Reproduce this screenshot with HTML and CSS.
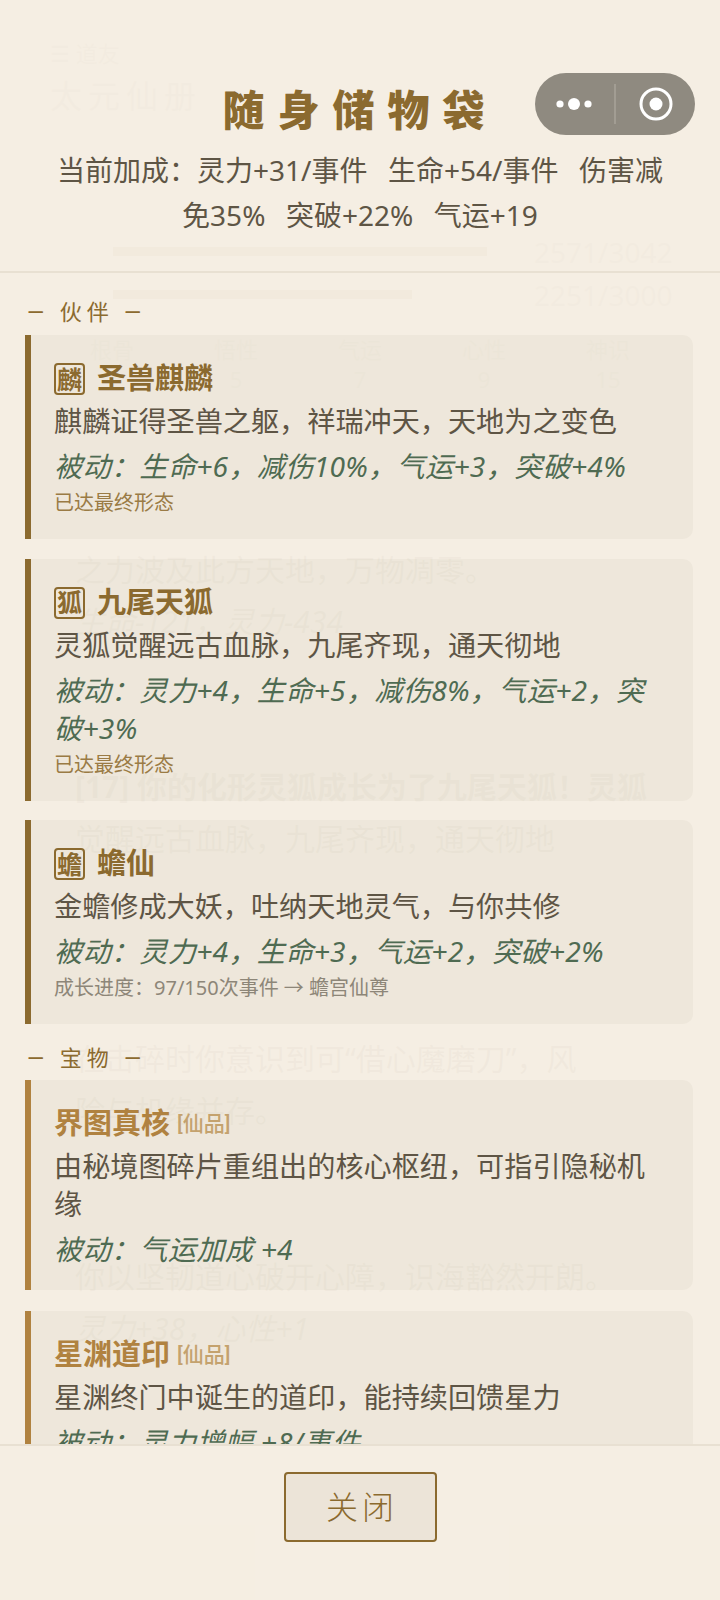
FILE: index.html
```html
<!DOCTYPE html>
<html lang="zh-CN">
<head>
<meta charset="utf-8">
<title>随身储物袋</title>
<link rel="stylesheet" href="styles.css">
</head>
<body>
<div class="app">
  <!-- game page underneath the bag sheet -->
  <div class="backdrop">
    <div class="bd-nav bd-dim">☰ 道友</div>
    <div class="bd-realm bd-dim">太元仙册</div>
    <div class="bd-meter bd-meter-first"><span class="bd-bar bd-bar-hp"></span><span class="bd-num bd-dim">2571/3042</span></div>
    <div class="bd-meter"><span class="bd-bar bd-bar-mp"></span><span class="bd-num bd-dim">2251/3000</span></div>
    <div class="bd-attrs bd-dim"><span>根骨</span><span>悟性</span><span>气运</span><span>心性</span><span>神识</span></div>
    <div class="bd-attrs bd-vals bd-dim"><span>7</span><span>5</span><span>7</span><span>9</span><span>15</span></div>
    <div class="bd-log">
      <p class="bd-line">之力波及此方天地，万物凋零。</p>
      <p class="bd-line bd-em">生命-121，灵力-434</p>
      <p class="bd-line bd-event">[17] 你的化形灵狐成长为了九尾天狐！灵狐</p>
      <p class="bd-line">觉醒远古血脉，九尾齐现，通天彻地</p>
      <p class="bd-line bd-event2">在击碎时你意识到可“借心魔磨刀”，风</p>
      <p class="bd-line">险与机缘并存。</p>
      <p class="bd-line bd-event3">你以坚韧道心破开心障，识海豁然开朗。</p>
      <p class="bd-line bd-em">灵力+38，心性+1</p>
    </div>
  </div>

  <div class="sheet">
    <header class="sheet-head">
      <h1 class="sheet-title">随身储物袋</h1>
      <p class="sheet-bonus">当前加成：灵力+31/事件&nbsp;&nbsp;生命+54/事件&nbsp;&nbsp;伤害减免35%&nbsp;&nbsp;突破+22%&nbsp;&nbsp;气运+19</p>
    </header>

    <main class="sheet-body">
      <h2 class="group-label">— 伙伴 —</h2>

      <article class="card">
        <div class="card-head"><span class="badge">麟</span><span class="card-name">圣兽麒麟</span></div>
        <p class="card-desc">麒麟证得圣兽之躯，祥瑞冲天，天地为之变色</p>
        <p class="card-passive">被动：生命+6，减伤10%，气运+3，突破+4%</p>
        <p class="card-note">已达最终形态</p>
      </article>

      <article class="card">
        <div class="card-head"><span class="badge">狐</span><span class="card-name">九尾天狐</span></div>
        <p class="card-desc">灵狐觉醒远古血脉，九尾齐现，通天彻地</p>
        <p class="card-passive">被动：灵力+4，生命+5，减伤8%，气运+2，突破+3%</p>
        <p class="card-note">已达最终形态</p>
      </article>

      <article class="card">
        <div class="card-head"><span class="badge">蟾</span><span class="card-name">蟾仙</span></div>
        <p class="card-desc">金蟾修成大妖，吐纳天地灵气，与你共修</p>
        <p class="card-passive">被动：灵力+4，生命+3，气运+2，突破+2%</p>
        <p class="card-note card-note-progress">成长进度：97/150次事件 → 蟾宫仙尊</p>
      </article>

      <h2 class="group-label group-label-next">— 宝物 —</h2>

      <article class="card card-treasure">
        <div class="card-head"><span class="card-name">界图真核</span><span class="card-tier">[仙品]</span></div>
        <p class="card-desc">由秘境图碎片重组出的核心枢纽，可指引隐秘机缘</p>
        <p class="card-passive">被动：气运加成 +4</p>
      </article>

      <article class="card card-treasure">
        <div class="card-head"><span class="card-name">星渊道印</span><span class="card-tier">[仙品]</span></div>
        <p class="card-desc">星渊终门中诞生的道印，能持续回馈星力</p>
        <p class="card-passive">被动：灵力增幅 +8/事件</p>
      </article>
    </main>

    <footer class="sheet-foot">
      <button class="close-btn" type="button">关闭</button>
    </footer>
  </div>

  <!-- mini-program capsule -->
  <div class="capsule">
    <svg class="capsule-icon" width="160" height="62" viewBox="0 0 160 62" aria-hidden="true">
      <circle cx="25" cy="31" r="3.6" fill="#fff"/>
      <circle cx="39" cy="31" r="6" fill="#fff"/>
      <circle cx="53" cy="31" r="3.6" fill="#fff"/>
      <rect x="79.5" y="11" width="1" height="40" fill="#b5b0a6"/>
      <circle cx="121" cy="31" r="15" fill="none" stroke="#fff" stroke-width="3"/>
      <circle cx="121" cy="31" r="6.5" fill="#fff"/>
    </svg>
  </div>
</div>
</body>
</html>
```

FILE: styles.css
```css
* {
  box-sizing: border-box;
}

html,
body {
  margin: 0;
  padding: 0;
}

body {
  width: 720px;
  height: 1600px;
  overflow: hidden;
  background: #f5ede0;
  font-family: "Noto Sans", "Noto Sans CJK SC", sans-serif;
}

.app {
  position: relative;
  width: 720px;
  height: 1600px;
  overflow: hidden;
}

/* Underlying page, seen faintly through the sheet */
.backdrop {
  position: absolute;
  inset: 0;
  color: #4a3d2a;
  padding: 40px 50px 0;
}

.bd-dim {
  opacity: 0.5;
}

.bd-nav {
  font-size: 22px;
  line-height: 26px;
}

.bd-realm {
  font-size: 32px;
  line-height: 44px;
  letter-spacing: 6px;
  margin-top: 8px;
}

.bd-meter {
  display: flex;
  align-items: center;
  height: 43px;
  padding-left: 63px;
}

.bd-meter-first {
  margin-top: 112px;
}

.bd-bar {
  display: block;
  height: 9px;
  background: #8b6a2f;
}

.bd-bar-hp {
  width: 374px;
}

.bd-bar-mp {
  width: 299px;
}

.bd-num {
  position: absolute;
  left: 534px;
  font-size: 28px;
}

.bd-attrs {
  display: grid;
  grid-template-columns: repeat(5, 1fr);
  font-size: 22px;
  line-height: 30px;
  margin-top: 18px;
  text-align: center;
  width: 620px;
}

.bd-vals {
  margin-top: 0;
}

.bd-log {
  height: 1000px;
  margin: 125px -5px 0;
  padding: 25px 0 0 30px;
  background: rgba(255, 255, 255, 0.5);
  font-size: 30px;
  line-height: 52px;
}

.bd-line {
  margin: 0;
}

.bd-em {
  font-style: italic;
}

.bd-event {
  margin-top: 113px;
  font-weight: 700;
}

.bd-event2 {
  margin-top: 168px;
}

.bd-event3 {
  margin-top: 114px;
}

/* Bag sheet */
.sheet {
  position: relative;
  display: flex;
  flex-direction: column;
  height: 1600px;
  background: rgba(245, 238, 226, 0.972);
}

.sheet-head {
  flex: none;
  height: 273px;
  padding: 80px 48px 0;
  border-bottom: 2px solid #e8e0d2;
  text-align: center;
}

.sheet-title {
  margin: 0;
  font-size: 42px;
  line-height: 60px;
  font-weight: 900;
  letter-spacing: 13px;
  color: #8b6a2f;
}

.sheet-bonus {
  margin: 8px 0 0;
  font-size: 28px;
  line-height: 45px;
  word-spacing: 3px;
  color: #5e5545;
}

.sheet-body {
  flex: 1;
  min-height: 0;
  overflow: hidden;
  padding: 25px 27px 0 25px;
}

.group-label {
  margin: 0 0 7px 2px;
  font-family: Roboto, "Noto Sans CJK SC", sans-serif;
  font-size: 22px;
  line-height: 30px;
  font-weight: 400;
  letter-spacing: 5px;
  color: #8b6a2f;
}

.group-label-next {
  margin-top: 19px;
  margin-bottom: 6px;
}

.card {
  margin-bottom: 19.5px;
  padding: 23px 30px 22px 23px;
  border-left: 6px solid #8b6a2f;
  border-radius: 0 10px 10px 0;
  background: rgba(110, 110, 80, 0.05);
}

.card-treasure {
  margin-bottom: 21px;
  border-left-color: #b08240;
}

.card-head {
  display: flex;
  align-items: center;
  gap: 12px;
  height: 40px;
}

.badge {
  display: flex;
  flex: none;
  align-items: center;
  justify-content: center;
  width: 31px;
  height: 32px;
  margin-top: 2px;
  border: 2px solid #8b6a2f;
  border-radius: 4px;
  font-size: 25px;
  line-height: 1;
  font-weight: 700;
  color: #8b6a2f;
}

.card-name {
  font-size: 29px;
  line-height: 40px;
  font-weight: 700;
  color: #8b6a2f;
}

.card-treasure .card-name {
  color: #b08240;
}

.card-tier {
  margin: 3px 0 0 -5px;
  font-family: Roboto, "Noto Sans CJK SC", sans-serif;
  font-size: 21px;
  line-height: 28px;
  font-weight: 500;
  color: #c4a26e;
}

.card-desc,
.card-passive {
  font-size: 28.15px;
  line-height: 38px;
}

.card-desc {
  margin: 4px 0 0;
  color: #5e5545;
}

.card-passive {
  margin: 7px 0 0;
  font-style: italic;
  letter-spacing: 0.3px;
  color: #4f6b52;
}

.card-note {
  margin: 3px 0 -1px;
  font-size: 20px;
  line-height: 30px;
  color: #9a7b45;
}

.card-note-progress {
  color: #8d8678;
}

/* Footer */
.sheet-foot {
  flex: none;
  display: flex;
  justify-content: center;
  height: 156px;
  padding-top: 26px;
  border-top: 2px solid #e8e0d2;
}

.close-btn {
  width: 153px;
  height: 70px;
  padding: 0 0 4px 4px;
  border: 2px solid #8b6a2f;
  border-radius: 4px;
  background: rgba(139, 115, 85, 0.08);
  font-family: inherit;
  font-size: 32px;
  font-weight: 300;
  letter-spacing: 4px;
  color: #8b6a2f;
}

.capsule {
  position: absolute;
  top: 73px;
  left: 535px;
  width: 160px;
  height: 62px;
  border-radius: 31px;
  background: #8f8a80;
}

.capsule-icon {
  display: block;
}
```
